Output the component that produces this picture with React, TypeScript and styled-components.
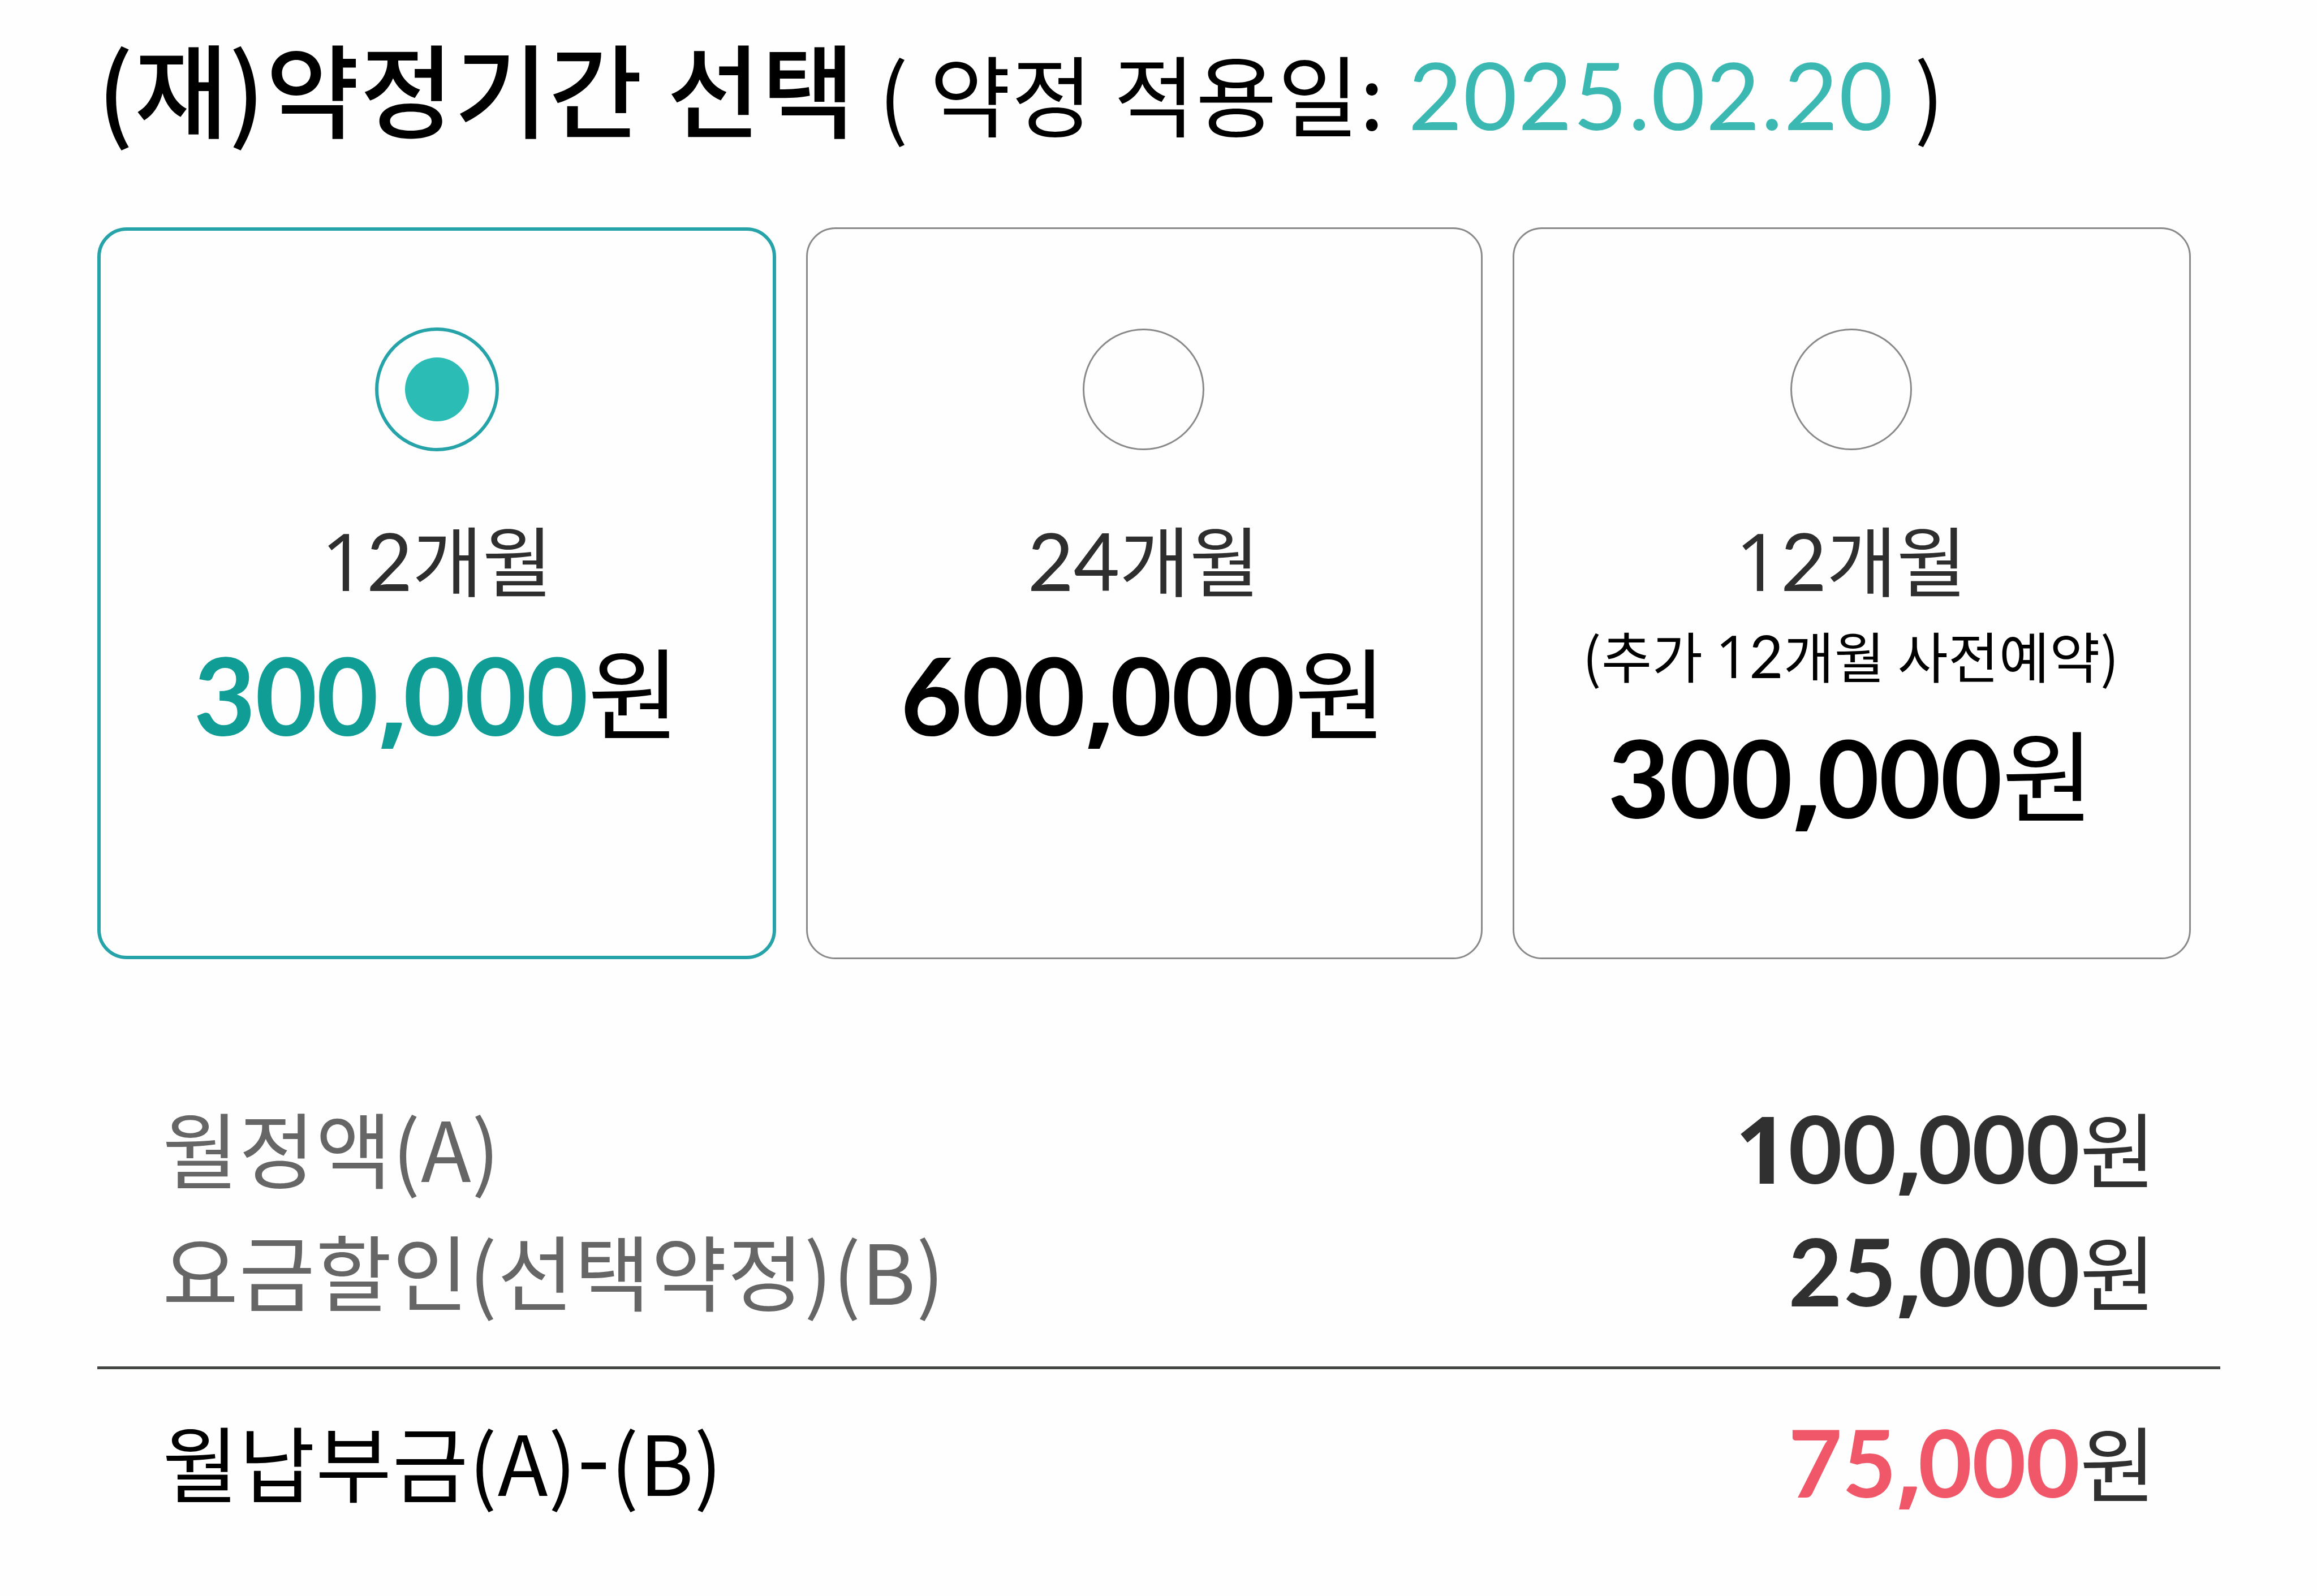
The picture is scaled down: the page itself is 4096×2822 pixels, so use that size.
import React from 'react';
import styled, { createGlobalStyle } from 'styled-components';

const plans = [
	{ id: 'p12', label: '12개월', price: '300,000', selected: true },
	{ id: 'p24', label: '24개월', price: '600,000' },
	{ id: 'p12x', label: '12개월', note: ['(추가 ', '12', '개월 사전예약)'], price: '300,000' },
];

const charges = [
	{ label: '월정액(A)', amount: '100,000' },
	{ label: '요금할인(선택약정)(B)', amount: '25,000' },
];

// "1" and "," come from a plainer face, the rest of the figures stay in Lato
function Figures({ value }: { value: string }) {
	return (
		<>
			{value.split(/([1,])/).map((part, i) => {
				if (part === '1') return <One key={i}>1</One>;
				if (part === ',') return <Comma key={i}>,</Comma>;
				return part;
			})}
		</>
	);
}

function Period({ label }: { label: string }) {
	const [, digits, unit] = label.match(/^(\d+)(.*)$/) || [];

	return (
		<PeriodLine>
			<PeriodDigits>
				<Figures value={digits} />
			</PeriodDigits>
			{unit}
		</PeriodLine>
	);
}

export default function App() {
	return (
		<>
			<GlobalStyle />
			<Page>
				<Title>
					<strong>(재)약정기간 선택</strong>
					<AppliedOn>
						( 약정 적용일: <AppliedDate>2025.02.20</AppliedDate> )
					</AppliedOn>
				</Title>

				<PlanList>
					{plans.map((plan) => (
						<PlanCard key={plan.id} $selected={plan.selected}>
							<Radio $selected={plan.selected}>{plan.selected && <Dot />}</Radio>
							<Period label={plan.label} />
							{plan.note && (
								<Note>
									{plan.note[0]}
									<NoteDigits>
										<Figures value={plan.note[1]} />
									</NoteDigits>
									{plan.note[2]}
								</Note>
							)}
							<Price $selected={plan.selected}>
								<b>
									<Figures value={plan.price} />
								</b>
								원
							</Price>
						</PlanCard>
					))}
				</PlanList>

				<Charges>
					{charges.map((row) => (
						<ChargeRow key={row.label}>
							<ChargeLabel>{row.label}</ChargeLabel>
							<Amount>
								<b>
									<Figures value={row.amount} />
								</b>
								원
							</Amount>
						</ChargeRow>
					))}
				</Charges>

				<Total>
					<ChargeLabel $strong>
						월납부금(A)<Minus>-</Minus>(B)
					</ChargeLabel>
					<Amount $accent>
						<b>
							<Figures value='75,000' />
						</b>
						원
					</Amount>
				</Total>
			</Page>
		</>
	);
}

const GlobalStyle = createGlobalStyle`
	* {
		box-sizing: border-box;
	}

	body {
		margin: 0;
		background: #fefefe;
		font-family: 'Noto Sans CJK KR', sans-serif;
		color: #000;
	}
`;

const Page = styled.main`
	width: 4096px;
	height: 2822px;
	padding: 52px 171px 0 172px;
	overflow: hidden;
`;

const Title = styled.h1`
	display: flex;
	align-items: baseline;
	height: 200px;
	margin: 0 0 150px;
	font-size: 180px;
	font-weight: 400;
	line-height: 200px;
	letter-spacing: 1.3px;
	white-space: nowrap;

	strong {
		font-weight: 500;
	}
`;

const AppliedOn = styled.span`
	margin-left: 40px;
	font-size: 156px;
`;

const AppliedDate = styled.span`
	margin-left: 5px;
	font-family: Lato, sans-serif;
	font-size: 165px;
	line-height: 0;
	letter-spacing: 1.5px;
	color: #3cb8b2;
`;

const PlanList = styled.div`
	display: grid;
	grid-template-columns: 1200px 1196px 1199px;
	column-gap: 53px;
`;

const PlanCard = styled.section<{ $selected?: boolean }>`
	display: flex;
	flex-direction: column;
	align-items: center;
	height: 1294px;
	padding-top: ${({ $selected }) => ($selected ? 171 : 176)}px;
	padding-right: ${({ $selected }) => ($selected ? 0 : 3)}px;
	border: ${({ $selected }) => ($selected ? '6px solid #25a3a8' : '3px solid #8a8889')};
	border-radius: 52px;
`;

const Radio = styled.span<{ $selected?: boolean }>`
	display: flex;
	align-items: center;
	justify-content: center;
	width: ${({ $selected }) => ($selected ? 219 : 215)}px;
	height: ${({ $selected }) => ($selected ? 219 : 215)}px;
	margin-bottom: ${({ $selected }) => ($selected ? 108 : 110)}px;
	border: ${({ $selected }) => ($selected ? '6px solid #25a3a8' : '3px solid #8a8889')};
	border-radius: 50%;
`;

const Dot = styled.span`
	width: 113px;
	height: 113px;
	border-radius: 50%;
	background: #2bbcb6;
`;

const One = styled.span`
	font-family: 'Open Sans', sans-serif;
`;

const Comma = styled.span`
	font-family: 'Open Sans', sans-serif;
	letter-spacing: -0.05em;
`;

const PeriodLine = styled.div`
	height: 160px;
	font-size: 135px;
	line-height: 160px;
	letter-spacing: -0.5px;
	color: #2e2e2e;
`;

const PeriodDigits = styled.span`
	font-family: Lato, sans-serif;
	font-size: 141px;
	line-height: 0;
`;

const Note = styled.div`
	height: 146px;
	font-size: 97px;
	line-height: 181px;
	letter-spacing: 0.4px;
	white-space: nowrap;
`;

const NoteDigits = styled.span`
	font-family: Lato, sans-serif;
	font-size: 104px;
	line-height: 0;
`;

const Price = styled.div<{ $selected?: boolean }>`
	height: 200px;
	margin-top: 52px;
	font-size: 177px;
	line-height: 200px;
	white-space: nowrap;

	b {
		font-family: Lato, sans-serif;
		font-size: 189px;
		font-weight: 700;
		line-height: 0;
		letter-spacing: -0.9px;
		vertical-align: -5px;
		color: ${({ $selected }) => ($selected ? '#0f9d96' : '#000')};
	}
`;

const Charges = styled.div`
	display: flex;
	flex-direction: column;
	gap: 17px;
	padding: 231px 114px 72px 115px;
	border-bottom: 5px solid #444644;
`;

const ChargeRow = styled.div`
	display: flex;
	align-items: baseline;
	justify-content: space-between;
	height: 200px;
	line-height: 200px;
`;

const Total = styled(ChargeRow)`
	padding: 61px 114px 0 115px;
`;

const ChargeLabel = styled.span<{ $strong?: boolean }>`
	font-size: 146px;
	letter-spacing: 1.2px;
	color: ${({ $strong }) => ($strong ? '#000' : '#666')};
`;

const Minus = styled.span`
	font-size: 168px;
	line-height: 0;
	vertical-align: 6px;
`;

const Amount = styled.span<{ $accent?: boolean }>`
	font-size: 146px;
	color: #303030;

	b {
		font-family: Lato, sans-serif;
		font-size: 165px;
		font-weight: 700;
		line-height: 0;
		letter-spacing: -0.4px;
		vertical-align: -3px;
		color: ${({ $accent }) => ($accent ? '#f0586a' : '#303030')};
	}
`;
